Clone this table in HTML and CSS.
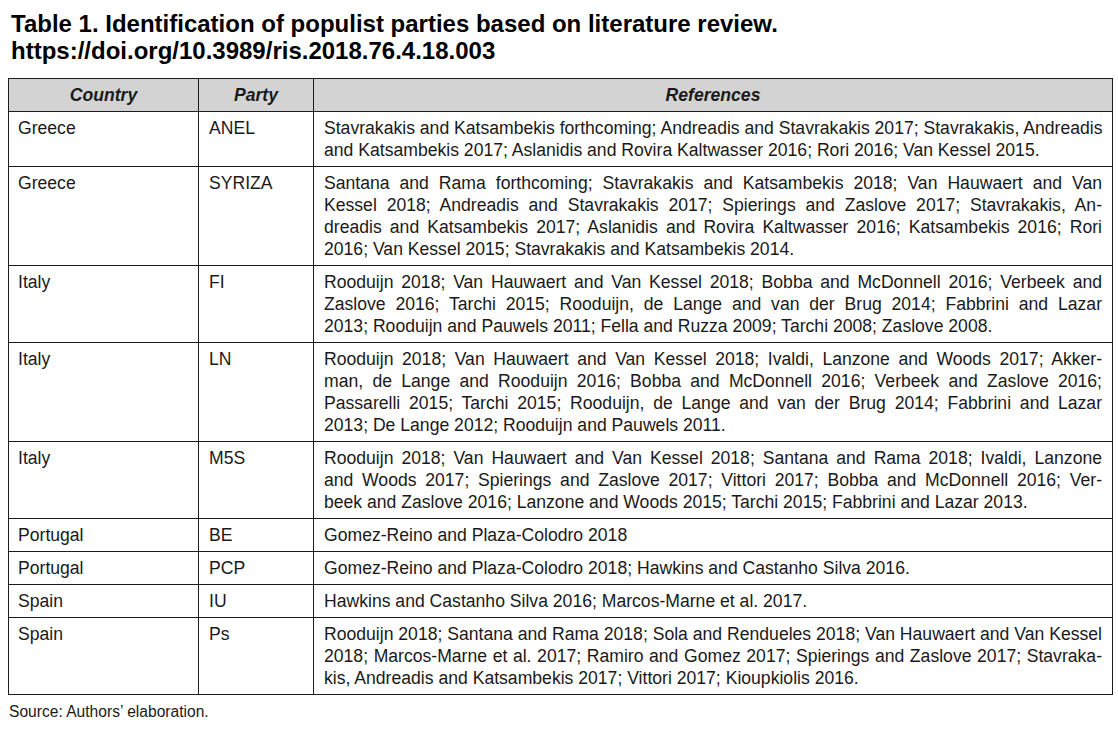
FILE: index.html
```html
<!DOCTYPE html>
<html lang="en">
<head>
<meta charset="utf-8">
<title>Table 1. Identification of populist parties</title>
<link rel="stylesheet" href="styles.css">
</head>
<body>
<main class="page">
  <h1 class="title">Table 1. Identification of populist parties based on literature review.<br>https://doi.org/10.3989/ris.2018.76.4.18.003</h1>
  <table class="data">
    <colgroup>
      <col class="c-country">
      <col class="c-party">
      <col class="c-refs">
    </colgroup>
    <thead>
      <tr><th>Country</th><th>Party</th><th>References</th></tr>
    </thead>
    <tbody>
      <tr>
        <td>Greece</td><td>ANEL</td>
        <td class="refs">
          <span class="ln">Stavrakakis and Katsambekis forthcoming; Andreadis and Stavrakakis 2017; Stavrakakis, Andreadis</span>
          <span class="ln last">and Katsambekis 2017; Aslanidis and Rovira Kaltwasser 2016; Rori 2016; Van Kessel 2015.</span>
        </td>
      </tr>
      <tr>
        <td>Greece</td><td>SYRIZA</td>
        <td class="refs">
          <span class="ln">Santana and Rama forthcoming; Stavrakakis and Katsambekis 2018; Van Hauwaert and Van</span>
          <span class="ln">Kessel 2018; Andreadis and Stavrakakis 2017; Spierings and Zaslove 2017; Stavrakakis, An-</span>
          <span class="ln">dreadis and Katsambekis 2017; Aslanidis and Rovira Kaltwasser 2016; Katsambekis 2016; Rori</span>
          <span class="ln last">2016; Van Kessel 2015; Stavrakakis and Katsambekis 2014.</span>
        </td>
      </tr>
      <tr>
        <td>Italy</td><td>FI</td>
        <td class="refs">
          <span class="ln">Rooduijn 2018; Van Hauwaert and Van Kessel 2018; Bobba and McDonnell 2016; Verbeek and</span>
          <span class="ln">Zaslove 2016; Tarchi 2015; Rooduijn, de Lange and van der Brug 2014; Fabbrini and Lazar</span>
          <span class="ln last">2013; Rooduijn and Pauwels 2011; Fella and Ruzza 2009; Tarchi 2008; Zaslove 2008.</span>
        </td>
      </tr>
      <tr>
        <td>Italy</td><td>LN</td>
        <td class="refs">
          <span class="ln">Rooduijn 2018; Van Hauwaert and Van Kessel 2018; Ivaldi, Lanzone and Woods 2017; Akker-</span>
          <span class="ln">man, de Lange and Rooduijn 2016; Bobba and McDonnell 2016; Verbeek and Zaslove 2016;</span>
          <span class="ln">Passarelli 2015; Tarchi 2015; Rooduijn, de Lange and van der Brug 2014; Fabbrini and Lazar</span>
          <span class="ln last">2013; De Lange 2012; Rooduijn and Pauwels 2011.</span>
        </td>
      </tr>
      <tr>
        <td>Italy</td><td>M5S</td>
        <td class="refs">
          <span class="ln">Rooduijn 2018; Van Hauwaert and Van Kessel 2018; Santana and Rama 2018; Ivaldi, Lanzone</span>
          <span class="ln">and Woods 2017; Spierings and Zaslove 2017; Vittori 2017; Bobba and McDonnell 2016; Ver-</span>
          <span class="ln last">beek and Zaslove 2016; Lanzone and Woods 2015; Tarchi 2015; Fabbrini and Lazar 2013.</span>
        </td>
      </tr>
      <tr>
        <td>Portugal</td><td>BE</td>
        <td class="refs"><span class="ln last">Gomez-Reino and Plaza-Colodro 2018</span></td>
      </tr>
      <tr>
        <td>Portugal</td><td>PCP</td>
        <td class="refs"><span class="ln last">Gomez-Reino and Plaza-Colodro 2018; Hawkins and Castanho Silva 2016.</span></td>
      </tr>
      <tr>
        <td>Spain</td><td>IU</td>
        <td class="refs"><span class="ln last">Hawkins and Castanho Silva 2016; Marcos-Marne et al. 2017.</span></td>
      </tr>
      <tr>
        <td>Spain</td><td>Ps</td>
        <td class="refs">
          <span class="ln">Rooduijn 2018; Santana and Rama 2018; Sola and Rendueles 2018; Van Hauwaert and Van Kessel</span>
          <span class="ln">2018; Marcos-Marne et al. 2017; Ramiro and Gomez 2017; Spierings and Zaslove 2017; Stavraka-</span>
          <span class="ln last">kis, Andreadis and Katsambekis 2017; Vittori 2017; Kioupkiolis 2016.</span>
        </td>
      </tr>
    </tbody>
  </table>
  <p class="source">Source: Authors’ elaboration.</p>
</main>
</body>
</html>
```

FILE: styles.css
```css
* {
  box-sizing: border-box;
}

html, body {
  margin: 0;
  padding: 0;
  background: #ffffff;
}

body {
  font-family: "Liberation Sans", Arial, sans-serif;
  color: #1a1a1a;
}

.page {
  padding: 10px 6px 0 8px;
}

.title {
  margin: 0 0 14px 3px;
  font-size: 24px;
  line-height: 27px;
  font-weight: bold;
  color: #000000;
}

.data {
  border-collapse: collapse;
  table-layout: fixed;
  width: 1105px;
  font-size: 17.6px;
  line-height: 22px;
}

.c-country {
  width: 190px;
}

.c-party {
  width: 115px;
}

.data th,
.data td {
  border: 1px solid #1c1c1c;
  padding: 5px 10px 5px 10px;
  vertical-align: top;
  text-align: left;
}

.data td:first-child {
  padding-left: 9px;
}

.data th {
  background: #d3d3d3;
  font-weight: bold;
  font-style: italic;
  text-align: center;
  color: #1a1a1a;
}

.refs .ln {
  display: block;
  white-space: nowrap;
  text-align: justify;
  text-align-last: justify;
}

.refs .ln.last {
  text-align-last: left;
}

.source {
  margin: 8px 0 0 1px;
  font-size: 15.6px;
  line-height: 18px;
  color: #1a1a1a;
}
```
